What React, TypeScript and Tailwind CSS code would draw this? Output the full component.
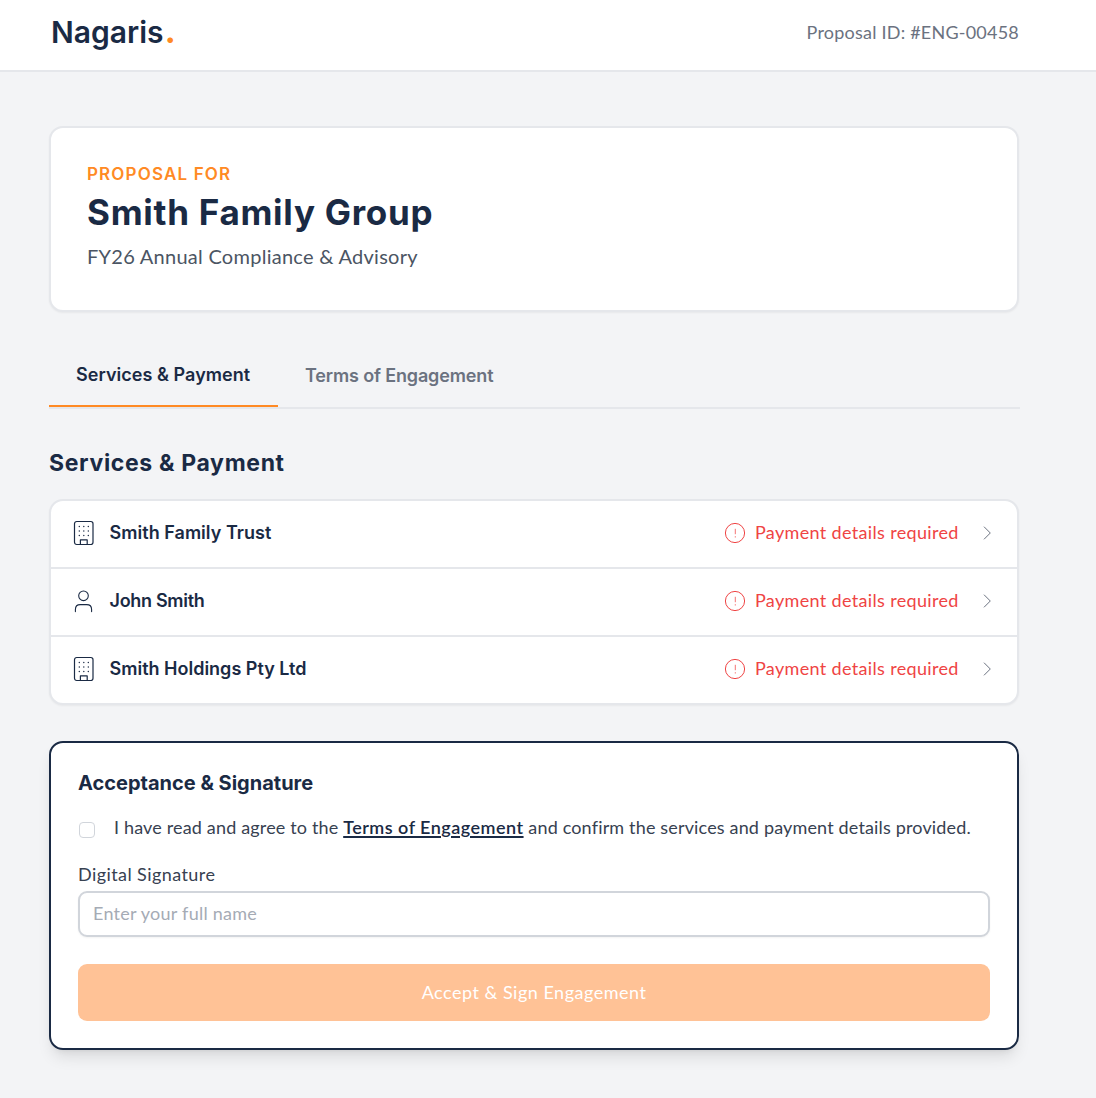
import type { ReactNode } from "react";

const head = "font-['Inter',sans-serif] text-[#1a2a44] whitespace-nowrap";

function BuildingIcon() {
  return (
    <svg width="22" height="26" viewBox="0 0 22 26" fill="none" stroke="#1a2a44" strokeWidth="1.2" strokeLinecap="round" strokeLinejoin="round">
      <rect x="1.5" y="1.5" width="18.5" height="23" rx="2.2" />
      <path d="M7.4 24.5v-4.6h6.8v4.6" />
      <path strokeWidth="1.4" d="M6.3 6.5h.01M10.8 6.5h.01M15.3 6.5h.01M6.3 11h.01M10.8 11h.01M15.3 11h.01M6.3 15.5h.01M10.8 15.5h.01M15.3 15.5h.01" />
    </svg>
  );
}

function UserIcon() {
  return (
    <svg width="22" height="26" viewBox="0 0 22 26" fill="none" stroke="#1a2a44" strokeWidth="1.1" strokeLinecap="round">
      <circle cx="10.5" cy="7.8" r="4.8" />
      <path d="M2.4 23.6v-2.1c0-3 1.8-4.9 4.900-4.900h6.400c3.100 0 4.900 1.900 4.900 4.900v2.100" />
    </svg>
  );
}

function AlertIcon() {
  return (
    <svg width="22" height="22" viewBox="0 0 22 22" fill="none" stroke="#ef4444" strokeWidth="1">
      <circle cx="11" cy="11" r="9.6" />
      <path strokeOpacity=".75" d="M11.3 6.8v5.4M11.3 14.2v1.3" />
    </svg>
  );
}

function Row({ icon, name, nameClass }: { icon: ReactNode; name: string; nameClass: string }) {
  return (
    <div className="box-content flex h-16 items-center px-[22px] pb-0.5">
      {icon}
      <span className={`${head} ml-[14.5px] text-[18px] leading-6 font-semibold ${nameClass}`}>{name}</span>
      <div className="ml-auto flex items-center text-[#ef4444]">
        <AlertIcon />
        <span className="ml-[9px] w-[204px] pb-0.5 text-[18px] leading-6 tracking-[0.34px] whitespace-nowrap">Payment details required</span>
        <svg className="ml-5" width="16" height="16" viewBox="0 0 16 16" fill="none" stroke="#6b7280" strokeWidth="1">
          <path d="M5 1.7 11.3 8 5 14.3" />
        </svg>
      </div>
    </div>
  );
}

export default function App() {
  return (
    <div className="h-[1098px] w-[1096px] overflow-hidden bg-[#f3f4f6] font-['Lato',sans-serif] text-[#374151]">
      <header className="flex h-[72px] items-center justify-between border-b-2 border-[#e5e7eb] bg-white pr-[77px] pb-1.5 pl-[51px]">
        <div className={`${head} flex text-[30px] leading-10 font-semibold`}>
          Nagaris<span className="-mt-0.5 ml-px text-[36px] text-[#ff8a24]">.</span>
        </div>
        <div className="text-[18px] leading-6 tracking-[0.22px] text-[#6b7280]">Proposal ID: #ENG-00458</div>
      </header>

      <main className="ml-[49px] w-[970px] pt-[54px]">
        <section className="h-[186px] rounded-[14px] border-2 border-[#e5e7eb] bg-white pt-[34px] pl-9 shadow-xs">
          <p className="font-['Inter',sans-serif] text-[17px] leading-6 font-semibold tracking-[1.15px] text-[#ff8a24]">PROPOSAL FOR</p>
          <h1 className={`${head} mt-1.5 text-[35px] leading-10 font-bold tracking-[0.73px]`}>Smith Family Group</h1>
          <p className="mt-2.5 text-[20px] leading-7 tracking-[0.27px] text-[#4b5563]">FY26 Annual Compliance &amp; Advisory</p>
        </section>

        <nav className="mt-8 flex h-[65px] w-[971px] border-b-2 border-[#e5e7eb]">
          <div className={`${head} h-[63px] w-[229px] border-b-2 border-[#ff8a24] pt-[19px] pl-[27px] text-[18px] leading-6 font-semibold tracking-[0.05px]`}>
            Services &amp; Payment
          </div>
          <div className="pt-5 pl-[27px] font-['Inter',sans-serif] text-[18px] leading-6 font-semibold tracking-[-0.15px] text-[#6b7280]">Terms of Engagement</div>
        </nav>

        <h2 className={`${head} mt-[38px] text-[23px] leading-8 font-bold tracking-[0.66px]`}>Services &amp; Payment</h2>

        <section className="mt-5 divide-y-2 divide-[#e5e7eb] rounded-[14px] border-2 border-[#e5e7eb] bg-white shadow-xs">
          <Row icon={<BuildingIcon />} name="Smith Family Trust" nameClass="tracking-[0.03px]" />
          <Row icon={<UserIcon />} name="John Smith" nameClass="tracking-[-0.3px]" />
          <Row icon={<BuildingIcon />} name="Smith Holdings Pty Ltd" nameClass="tracking-normal" />
        </section>

        <section className="mt-9 h-[309px] rounded-[14px] border-2 border-[#1a2a44] bg-white px-[27px] pt-[26px] shadow-lg">
          <h3 className={`${head} text-[20px] leading-7 font-bold`}>Acceptance &amp; Signature</h3>
          <label className="mt-[18px] flex h-6 items-center text-[18px] leading-6">
            <input type="checkbox" className="mt-[5px] ml-px size-4 appearance-none rounded-[4px] border border-[#d1d5db] bg-white" />
            <span className="ml-[19px] tracking-[0.16px] whitespace-nowrap">
              I have read and agree to the{" "}
              <a className="font-semibold tracking-[0.48px] text-[#1a2a44] underline decoration-2 underline-offset-2">Terms of Engagement</a>{" "}
              and confirm the services and payment details provided.
            </span>
          </label>
          <div className="mt-[23px] text-[18px] leading-6 tracking-[0.42px]">Digital Signature</div>
          <input
            placeholder="Enter your full name"
            className="mt-[5px] block h-[46px] w-full rounded-[9px] border-2 border-[#d1d5db] bg-white px-[13px] pb-0.5 text-[18px] tracking-[0.25px] shadow-xs placeholder:text-[#a5abb5]"
          />
          <button className="mt-[27px] block h-[57px] w-full rounded-[9px] bg-[#ffc296] pb-px text-[18px] tracking-[0.5px] text-white">Accept &amp; Sign Engagement</button>
        </section>
      </main>
    </div>
  );
}
